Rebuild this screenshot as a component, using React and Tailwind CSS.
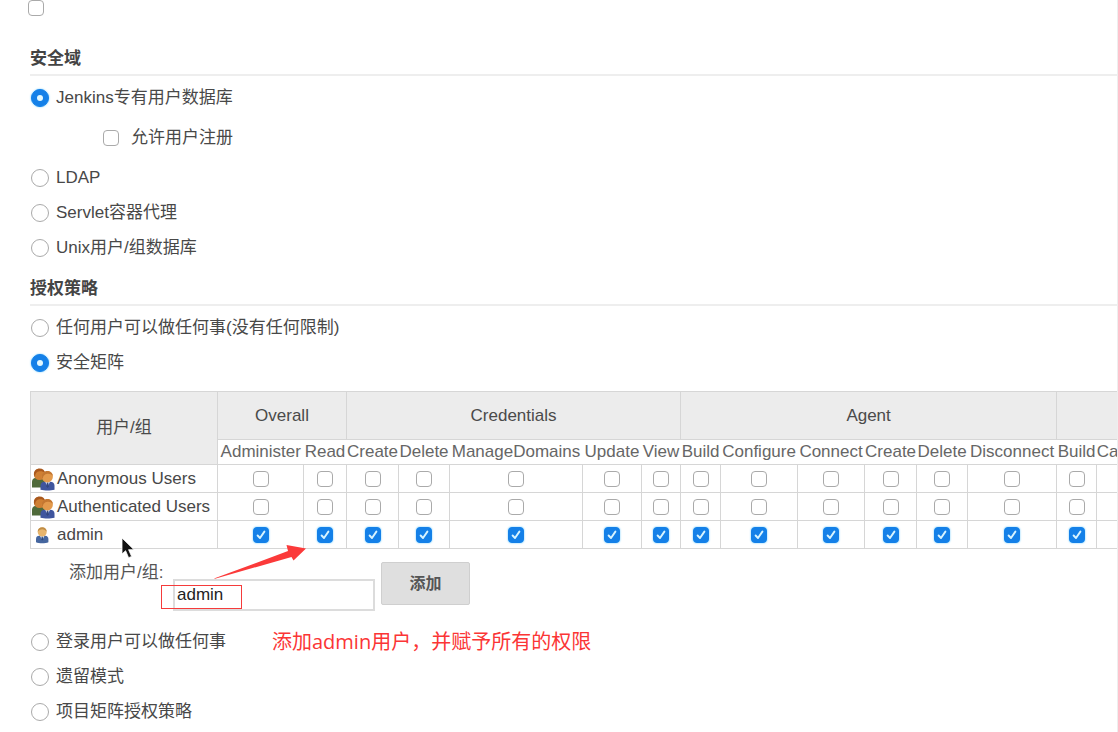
import React from "react";

const groups = [
  { name: "Overall", permissions: ["Administer", "Read"] },
  { name: "Credentials", permissions: ["Create", "Delete", "ManageDomains", "Update", "View"] },
  { name: "Agent", permissions: ["Build", "Configure", "Connect", "Create", "Delete", "Disconnect"] },
  { name: "", permissions: ["Build", "Cancel"] },
];

const columnWidths = [187, 86, 43, 52, 51, 133, 59, 39, 40, 77, 67, 52, 51, 89, 40, 62];

const users = [
  { name: "Anonymous Users", icon: "group", granted: false },
  { name: "Authenticated Users", icon: "group", granted: false },
  { name: "admin", icon: "single", granted: true },
];

function Checkbox({ id, label, checked = false }) {
  return (
    <span className="inline-grid size-4 shrink-0 align-middle">
      <input
        type="checkbox"
        id={id}
        aria-label={label}
        defaultChecked={checked}
        className="peer size-4 appearance-none rounded-sm border border-[#aaaaaa] bg-white [grid-area:1/1] checked:border-[#1480e8] checked:bg-[#1480e8] checked:shadow-[0_0_2px_#5cc4ff]"
      />
      <svg
        viewBox="0 0 16 16"
        className="pointer-events-none hidden size-4 [grid-area:1/1] peer-checked:block"
        fill="none"
        stroke="#d8f4ff"
        strokeWidth="1.9"
        strokeLinecap="round"
        strokeLinejoin="round"
      >
        <path d="M4.6 8.5 7 11l4.4-6.4" />
      </svg>
    </span>
  );
}

function RadioRow({ id, name, label, checked = false, children }) {
  return (
    <div className="relative flex h-[35px] items-center">
      <span className="ml-px grid size-[18px] shrink-0 place-items-center">
        <input
          type="radio"
          id={id}
          name={name}
          defaultChecked={checked}
          className="peer size-[18px] appearance-none rounded-full border border-[#aaaaaa] bg-white [grid-area:1/1] checked:border-[#1480e8] checked:bg-[#1480e8] checked:shadow-[0_0_2px_#5cc4ff]"
        />
        <span className="pointer-events-none hidden size-[6px] rounded-full bg-[#e2f8ff] [grid-area:1/1] peer-checked:block" />
      </span>
      <label htmlFor={id} className="pl-[7px] whitespace-nowrap">
        {label}
      </label>
      {children}
    </div>
  );
}

function SectionHeading({ children }) {
  return (
    <h2 className="mb-1 flex h-[41px] items-center border-b-2 border-[#eeeeee] pt-2 font-bold text-[#444444]">
      {children}
    </h2>
  );
}

function GroupIcon() {
  return (
    <svg viewBox="0 0 24 24" className="size-6 shrink-0" aria-hidden="true">
      <path d="M1 20.500v-5.700c0-2.500 2-4 4.300-4h5c2 0 3.500 1.500 3.500 4v5.700z" fill="#4f6a3a" />
      <circle cx="8.500" cy="7.500" r="5.600" fill="#cf7f33" />
      <path d="M2.900 7C3 3.600 5.400 1.500 8.600 1.500c3 0 5.300 1.700 5.500 4.700C12.500 4.600 10.700 4 8.500 4.300 5.500 4.700 4 6.500 4 10c-.7-.8-1.100-1.900-1.100-3z" fill="#a9581d" />
      <path d="M9.500 22.800v-4.300c0-2.500 1.700-3.800 4-3.800h5.800c2.500 0 4.200 1.500 4.200 4v4.100c-4 1-10 1-14 0z" fill="#3f559e" />
      <path d="m14 14.500 2.600 5 2.600-5z" fill="#d5deef" />
      <path d="m16 15.500-.6 3.700 1.200 1.800 1.200-1.800-.6-3.700z" fill="#34477f" />
      <circle cx="16.300" cy="9.800" r="5.600" fill="#e39a4c" />
      <path d="M10.700 9.300C10.800 6 13.200 3.900 16.400 3.900c3 0 5.400 2 5.500 5.100-1.600-1.900-3.300-2.600-5.500-2.300-3 .4-4.600 2.200-4.600 5.600-.7-.8-1.100-1.900-1.100-3z" fill="#c47731" />
    </svg>
  );
}

function PersonIcon() {
  return (
    <svg viewBox="0 0 24 24" className="size-6 shrink-0" aria-hidden="true">
      <path d="M5 19.200v-3.200c0-2 1.400-3.200 3.200-3.200h6c2 0 3.200 1.300 3.200 3.200v3.200c-3 1.300-9.400 1.300-12.400 0z" fill="#45669f" />
      <path d="m8.900 12.800 2.300 4.400 2.300-4.400z" fill="#dfe7f1" />
      <path d="m10.700 13.600-.5 2.800 1 1.300 1-1.300-.5-2.800z" fill="#2f4a80" />
      <circle cx="11.200" cy="9" r="4.500" fill="#e7b56d" />
      <path d="M6.700 8.800C6.700 6 8.500 4.300 11.200 4.300s4.500 1.700 4.500 4.500C14.400 7.200 13.200 6.300 11.200 6.300S8 7.200 6.700 8.800z" fill="#c08d45" />
    </svg>
  );
}

function PermissionMatrix() {
  const columns = groups.flatMap((group) =>
    group.permissions.map((permission) => ({ group: group.name, permission }))
  );
  return (
    <table className="w-[1128px] table-fixed border-collapse border border-[#d6d6d6]">
      <colgroup>
        {columnWidths.map((width, i) => (
          <col key={i} style={{ width }} />
        ))}
      </colgroup>
      <thead>
        <tr className="h-12 bg-[#ececec]">
          <th rowSpan={2} className="border border-[#d6d6d6] p-0 font-normal text-[#4a4a4a]">
            用户/组
          </th>
          {groups.map((group, i) => (
            <th
              key={i}
              colSpan={group.permissions.length}
              className="border border-[#d6d6d6] p-0 font-normal text-[#4a4a4a]"
            >
              {group.name}
            </th>
          ))}
        </tr>
        <tr className="h-[25px]">
          {columns.map((column, i) => (
            <th
              key={i}
              className="border-b border-[#d6d6d6] p-0 text-center font-normal text-[#666666] last:text-left"
            >
              {column.permission}
            </th>
          ))}
        </tr>
      </thead>
      <tbody>
        {users.map((user) => (
          <tr key={user.name} className="h-7">
            <td className="border border-[#d6d6d6] p-0">
              <div className="flex items-center gap-[2px] leading-6 whitespace-nowrap">
                {user.icon === "group" ? <GroupIcon /> : <PersonIcon />}
                {user.name}
              </div>
            </td>
            {columns.map((column, i) => (
              <td key={i} className="border border-[#d6d6d6] p-0 text-center leading-none">
                <Checkbox
                  label={`${user.name} ${column.group} ${column.permission}`}
                  checked={user.granted}
                />
              </td>
            ))}
          </tr>
        ))}
      </tbody>
    </table>
  );
}

function AddUserForm() {
  return (
    <div className="relative flex h-[75px] items-start pl-[39px]">
      <label htmlFor="new-user" className="w-[104px] pt-3 leading-6 whitespace-nowrap text-[#555555]">
        添加用户/组:
      </label>
      <input
        id="new-user"
        type="text"
        defaultValue="admin"
        className="mt-[30px] h-8 w-[202px] border-2 border-[#dcdcdc] bg-white px-[2px] text-[#222222] outline-none"
      />
      <button
        type="button"
        className="mt-[13px] ml-[6px] h-[43px] w-[89px] rounded-xs border border-[#cfcfcf] bg-[#dfdfdf] text-base font-bold text-[#555555]"
      >
        添加
      </button>
      <span className="pointer-events-none absolute top-9 left-[131px] h-6 w-[81px] border border-[#f53b3b]" />
      <svg
        viewBox="0 0 92 36"
        className="pointer-events-none absolute -top-1 left-[184px] h-9 w-[92px]"
        aria-hidden="true"
      >
        <path d="M0 33.500 74 6 72.500 0 92 3.500 79.500 15.500 77.500 12 1 33.800z" fill="#fb3a3a" />
      </svg>
      <svg
        viewBox="0 0 14 22"
        className="pointer-events-none absolute -top-3 left-[91px] h-[22px] w-[14px]"
        aria-hidden="true"
      >
        <path
          d="M1 1v16l3.600-3.300 3 7 3-1.300-3-6.700H13z"
          fill="#111111"
          stroke="#ffffff"
          strokeWidth="0.8"
        />
      </svg>
    </div>
  );
}

export default function App() {
  return (
    <main className="min-h-screen overflow-hidden border-r border-[#eeeeee] bg-white pl-[30px] font-['Liberation_Sans','Noto_Sans_CJK_SC',sans-serif] text-[17px] leading-6 text-[#484848]">
      <div className="-ml-[2px] flex h-[35px] items-start">
        <Checkbox label="选项" />
      </div>

      <section>
        <SectionHeading>安全域</SectionHeading>
        <RadioRow id="realm-jenkins" name="realm" label="Jenkins专有用户数据库" checked />
        <div className="flex h-[45px] items-center gap-3 pl-[73px]">
          <Checkbox id="allow-signup" />
          <label htmlFor="allow-signup">允许用户注册</label>
        </div>
        <RadioRow id="realm-ldap" name="realm" label="LDAP" />
        <RadioRow id="realm-servlet" name="realm" label="Servlet容器代理" />
        <RadioRow id="realm-unix" name="realm" label="Unix用户/组数据库" />
      </section>

      <section>
        <SectionHeading>授权策略</SectionHeading>
        <RadioRow id="auth-anyone" name="auth" label="任何用户可以做任何事(没有任何限制)" />
        <RadioRow id="auth-matrix" name="auth" label="安全矩阵" checked />
        <div className="pt-[11px]">
          <PermissionMatrix />
        </div>
        <AddUserForm />
        <RadioRow id="auth-loggedin" name="auth" label="登录用户可以做任何事">
          <p className="pointer-events-none absolute left-[242px] font-['Open_Sans','Noto_Sans_CJK_SC',sans-serif] text-xl whitespace-nowrap text-[#fb3535]">
            添加admin用户，并赋予所有的权限
          </p>
        </RadioRow>
        <RadioRow id="auth-legacy" name="auth" label="遗留模式" />
        <RadioRow id="auth-project" name="auth" label="项目矩阵授权策略" />
      </section>
    </main>
  );
}
